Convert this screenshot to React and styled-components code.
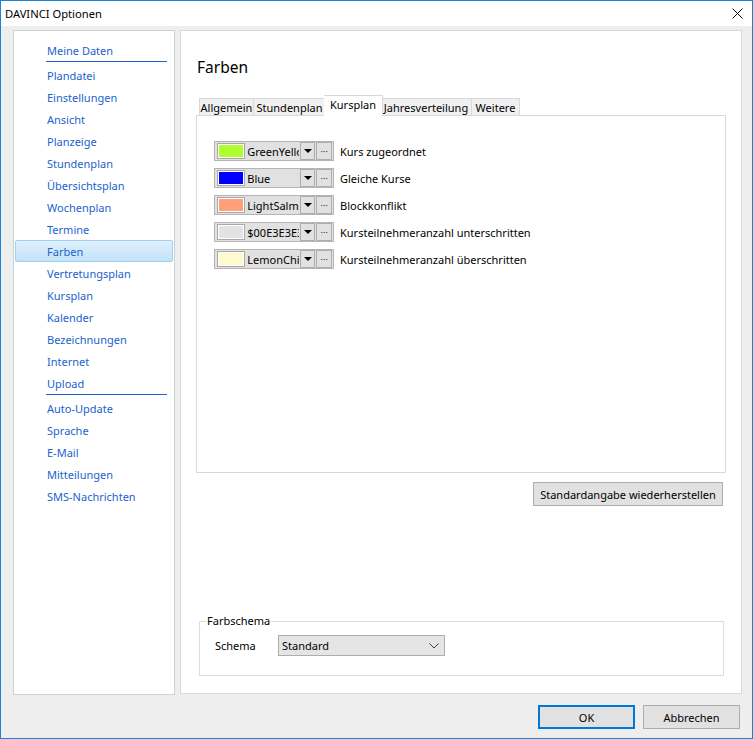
import React from "react";
import styled, { createGlobalStyle } from "styled-components";

const GlobalStyle = createGlobalStyle`
    html, body {
        margin: 0;
        padding: 0;
        width: 753px;
        height: 739px;
        overflow: hidden;
        background: #eeeeee;
    }
    * {
        box-sizing: border-box;
    }
`;

const Window = styled.div`
    width: 753px;
    height: 739px;
    border: 1px solid #1883d7;
    background: #eeeeee;
    display: flex;
    flex-direction: column;
    font-family: "Noto Sans", "Liberation Sans", sans-serif;
    font-size: 11px;
    color: #000;
`;

const TitleBar = styled.div`
    height: 25px;
    background: #fff;
    display: flex;
    align-items: center;
    justify-content: space-between;
    padding: 0 9px 0 4px;
    font-size: 11.2px;
`;

const Body = styled.div`
    display: flex;
    gap: 5px;
    padding: 4px 10px 0 12px;
    height: 669px;
`;

const NavPanel = styled.div`
    width: 162px;
    height: 665px;
    background: #fff;
    border: 1px solid #c9d1d9;
    padding: 8px 0 0 0;
    display: flex;
    flex-direction: column;
`;

const NavItem = styled.div`
    height: 22px;
    display: flex;
    align-items: center;
    padding-left: 31px;
    margin: 0 1px;
    color: #1c62cc;
    border: 1px solid transparent;
    border-radius: 2px;
    ${(p) =>
        p.$active &&
        `
        background: linear-gradient(#dff0fc, #c3e2f8);
        border-color: #9fd2f2;
    `}
`;

const NavSeparator = styled.div`
    height: 1px;
    background: #1c62cc;
    margin: 0 7px 2px 32px;
`;

const Content = styled.div`
    flex: 1;
    height: 664px;
    background: #fff;
    border: 1px solid #d9d9d9;
    padding: 0 15px 17px 15px;
    display: flex;
    flex-direction: column;
`;

const Heading = styled.h1`
    margin: 24px 0 0 1px;
    height: 25px;
    font-size: 15.5px;
    font-weight: normal;
    line-height: 25px;
`;

const TabStrip = styled.div`
    display: flex;
    align-items: flex-end;
    margin-top: 16px;
    padding-left: 3px;
    height: 20px;
    position: relative;
    z-index: 1;
`;

const Tab = styled.div`
    width: ${(p) => p.$w}px;
    height: ${(p) => (p.$active ? 21 : 18)}px;
    display: flex;
    align-items: center;
    justify-content: center;
    white-space: nowrap;
    background: ${(p) => (p.$active ? "#fff" : "#f0f0f0")};
    border: 1px solid #d9d9d9;
    border-bottom: ${(p) => (p.$active ? "none" : "1px solid #d9d9d9")};
    margin: ${(p) => (p.$active ? "0 -2px" : "0")};
    padding-bottom: ${(p) => (p.$active ? 3 : 0)}px;
    position: relative;
    z-index: ${(p) => (p.$active ? 2 : 0)};
    & + & {
        border-left: none;
    }
`;

const TabPanel = styled.div`
    height: 358px;
    border: 1px solid #d9d9d9;
    margin-top: -1px;
    padding: 25px 0 0 17px;
    display: flex;
    flex-direction: column;
    gap: 7px;
`;

const ColorRow = styled.div`
    display: flex;
    align-items: center;
    gap: 6px;
`;

const ColorCombo = styled.div`
    width: 120px;
    height: 20px;
    border: 1px solid #b4b4b4;
    background: #e1e1e1;
    display: flex;
    align-items: center;
    padding: 0 1px;
`;

const Swatch = styled.div`
    width: 29px;
    height: 16px;
    background: ${(p) => p.$color};
    border: 1px solid #a8a8a8;
    box-shadow: inset 0 0 0 1px #fff;
    margin-left: 1px;
`;

const ColorName = styled.div`
    width: 53px;
    margin-left: 2px;
    white-space: nowrap;
    overflow: hidden;
`;

const SmallButton = styled.div`
    width: 16px;
    height: 18px;
    border: 1px solid #adadad;
    background: #e1e1e1;
    display: flex;
    align-items: center;
    justify-content: center;
    margin-left: 1px;
    font-size: 9px;
    color: #333;
`;

const Arrow = styled.div`
    width: 0;
    height: 0;
    border-left: 4px solid transparent;
    border-right: 4px solid transparent;
    border-top: 4px solid #000;
`;

const ButtonRow = styled.div`
    display: flex;
    justify-content: flex-end;
    margin-top: 9px;
    padding-right: 3px;
`;

const Button = styled.button`
    width: ${(p) => p.$w}px;
    height: ${(p) => p.$h || 24}px;
    background: #e1e1e1;
    border: ${(p) => (p.$default ? "2px solid #0078d7" : "1px solid #adadad")};
    font-family: inherit;
    font-size: 11px;
    color: #000;
    padding: 0;
    white-space: nowrap;
`;

const Spacer = styled.div`
    flex: 1;
`;

const GroupBox = styled.fieldset`
    margin: 0 2px 0 3px;
    height: 62px;
    border: 1px solid #dcdcdc;
    padding: 0 0 0 6px;
`;

const Legend = styled.legend`
    padding: 0 1px;
    font-size: 11px;
    line-height: 14px;
`;

const SchemaRow = styled.div`
    display: flex;
    align-items: center;
    padding: 7px 0 0 9px;
`;

const SchemaLabel = styled.div`
    width: 63px;
`;

const Select = styled.div`
    width: 167px;
    height: 21px;
    background: #e5e5e5;
    border: 1px solid #adadad;
    display: flex;
    align-items: center;
    justify-content: space-between;
    padding: 0 5px 0 3px;
`;

const Footer = styled.div`
    flex: 1;
    display: flex;
    justify-content: flex-end;
    gap: 8px;
    padding: 10px 12px 0 0;
`;

const navTop = ["Meine Daten"];
const navMid = [
    "Plandatei",
    "Einstellungen",
    "Ansicht",
    "Planzeige",
    "Stundenplan",
    "Übersichtsplan",
    "Wochenplan",
    "Termine",
    "Farben",
    "Vertretungsplan",
    "Kursplan",
    "Kalender",
    "Bezeichnungen",
    "Internet",
    "Upload",
];
const navBottom = ["Auto-Update", "Sprache", "E-Mail", "Mitteilungen", "SMS-Nachrichten"];

const tabs = [
    { label: "Allgemein", w: 55 },
    { label: "Stundenplan", w: 72 },
    { label: "Kursplan", w: 59, active: true },
    { label: "Jahresverteilung", w: 91 },
    { label: "Weitere", w: 48 },
];

const colors = [
    { color: "#adff2f", name: "GreenYellow", label: "Kurs zugeordnet" },
    { color: "#0000ff", name: "Blue", label: "Gleiche Kurse" },
    { color: "#ffa07a", name: "LightSalmon", label: "Blockkonflikt" },
    { color: "#e3e3e3", name: "$00E3E3E3", label: "Kursteilnehmeranzahl unterschritten" },
    { color: "#fffacd", name: "LemonChiffon", label: "Kursteilnehmeranzahl überschritten" },
];

const App = () => {
    return (
        <>
            <GlobalStyle />
            <Window>
                <TitleBar>
                    <span>DAVINCI Optionen</span>
                    <svg width="11" height="11" viewBox="0 0 11 11">
                        <path d="M0.5 0.5 L10.5 10.5 M10.5 0.5 L0.5 10.5" stroke="#000" strokeWidth="1" />
                    </svg>
                </TitleBar>
                <Body>
                    <NavPanel>
                        {navTop.map((n) => (
                            <NavItem key={n}>{n}</NavItem>
                        ))}
                        <NavSeparator />
                        {navMid.map((n) => (
                            <NavItem key={n} $active={n === "Farben"}>
                                {n}
                            </NavItem>
                        ))}
                        <NavSeparator />
                        {navBottom.map((n) => (
                            <NavItem key={n}>{n}</NavItem>
                        ))}
                    </NavPanel>
                    <Content>
                        <Heading>Farben</Heading>
                        <TabStrip>
                            {tabs.map((t) => (
                                <Tab key={t.label} $w={t.w} $active={t.active}>
                                    {t.label}
                                </Tab>
                            ))}
                        </TabStrip>
                        <TabPanel>
                            {colors.map((c) => (
                                <ColorRow key={c.label}>
                                    <ColorCombo>
                                        <Swatch $color={c.color} />
                                        <ColorName>{c.name}</ColorName>
                                        <SmallButton>
                                            <Arrow />
                                        </SmallButton>
                                        <SmallButton>···</SmallButton>
                                    </ColorCombo>
                                    <span>{c.label}</span>
                                </ColorRow>
                            ))}
                        </TabPanel>
                        <ButtonRow>
                            <Button $w={190} $h={24}>
                                Standardangabe wiederherstellen
                            </Button>
                        </ButtonRow>
                        <Spacer />
                        <GroupBox>
                            <Legend>Farbschema</Legend>
                            <SchemaRow>
                                <SchemaLabel>Schema</SchemaLabel>
                                <Select>
                                    <span>Standard</span>
                                    <svg width="10" height="6" viewBox="0 0 10 6">
                                        <path d="M0.5 0.5 L5 5 L9.5 0.5" fill="none" stroke="#444" strokeWidth="1" />
                                    </svg>
                                </Select>
                            </SchemaRow>
                        </GroupBox>
                    </Content>
                </Body>
                <Footer>
                    <Button $w={97} $default>
                        OK
                    </Button>
                    <Button $w={97}>Abbrechen</Button>
                </Footer>
            </Window>
        </>
    );
};

export default App;
